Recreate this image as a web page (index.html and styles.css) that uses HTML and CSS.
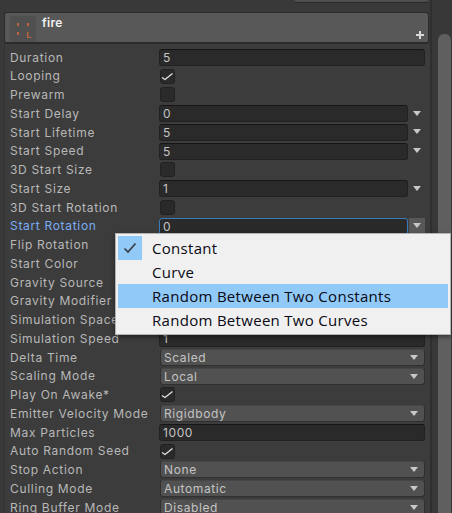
FILE: index.html
```html
<!DOCTYPE html>
<html>
    <head>
        <meta charset="UTF-8">
        <meta name="viewport" content="width=device-width, initial-scale=1.0">
        <title>Particle System</title>
        <link rel="stylesheet" href="styles.css">
    </head>
    <body>
        <div class="page">
            <div class="inspector">
                <div class="top-strip"></div>

                <div class="module-head">
                    <div class="module-icon">
                        <svg width="26" height="26" viewBox="0 0 26 26">
                            <rect x="7" y="7" width="2" height="3" fill="#b8603f"/>
                            <rect x="17" y="7" width="2" height="3" fill="#c0623e"/>
                            <rect x="7" y="16" width="2" height="3" fill="#b8603f"/>
                            <path d="M17 16h1.500v5h3v1h-4.500z" fill="#b8603f"/>
                        </svg>
                    </div>
                    <span class="module-name">fire</span>
                    <svg class="module-plus" width="8" height="8" viewBox="0 0 8 8">
                        <path d="M3 0h2v3h3v2h-3v3h-2v-3h-3v-2h3z" fill="#d8d8d8"/>
                    </svg>
                </div>

                <div class="rows">
                    <div class="row"><label>Duration</label><div class="field">5</div></div>
                    <div class="row"><label>Looping</label><div class="check"><svg width="13" height="13" viewBox="0 0 13 13"><path d="M1 7.500l3 2 7.500-6" fill="none" stroke="#e4e4e4" stroke-width="1.300"/></svg></div></div>
                    <div class="row"><label>Prewarm</label><div class="check"></div></div>
                    <div class="row"><label>Start Delay</label><div class="field short">0</div><div class="curve-btn"></div></div>
                    <div class="row"><label>Start Lifetime</label><div class="field short">5</div><div class="curve-btn"></div></div>
                    <div class="row"><label>Start Speed</label><div class="field short">5</div><div class="curve-btn"></div></div>
                    <div class="row"><label>3D Start Size</label><div class="check"></div></div>
                    <div class="row"><label>Start Size</label><div class="field short">1</div><div class="curve-btn"></div></div>
                    <div class="row"><label>3D Start Rotation</label><div class="check"></div></div>
                    <div class="row"><label class="active">Start Rotation</label><div class="field short focus">0</div><div class="curve-btn open"></div></div>
                    <div class="row"><label>Flip Rotation</label><div class="field"></div></div>
                    <div class="row"><label>Start Color</label><div class="field"></div></div>
                    <div class="row"><label>Gravity Source</label><div class="popup"></div></div>
                    <div class="row"><label>Gravity Modifier</label><div class="field short"></div><div class="curve-btn"></div></div>
                    <div class="row"><label>Simulation Space</label><div class="popup"></div></div>
                    <div class="row"><label>Simulation Speed</label><div class="field">1</div></div>
                    <div class="row"><label>Delta Time</label><div class="popup">Scaled</div></div>
                    <div class="row"><label>Scaling Mode</label><div class="popup">Local</div></div>
                    <div class="row"><label>Play On Awake*</label><div class="check"><svg width="13" height="13" viewBox="0 0 13 13"><path d="M1 7.500l3 2 7.500-6" fill="none" stroke="#e4e4e4" stroke-width="1.300"/></svg></div></div>
                    <div class="row"><label>Emitter Velocity Mode</label><div class="popup">Rigidbody</div></div>
                    <div class="row"><label>Max Particles</label><div class="field">1000</div></div>
                    <div class="row"><label>Auto Random Seed</label><div class="check"><svg width="13" height="13" viewBox="0 0 13 13"><path d="M1 7.500l3 2 7.500-6" fill="none" stroke="#e4e4e4" stroke-width="1.300"/></svg></div></div>
                    <div class="row"><label>Stop Action</label><div class="popup">None</div></div>
                    <div class="row"><label>Culling Mode</label><div class="popup">Automatic</div></div>
                    <div class="row"><label>Ring Buffer Mode</label><div class="popup">Disabled</div></div>
                </div>
            </div>

            <div class="scrollbar"><div class="thumb"></div></div>

            <div class="menu">
                <div class="menu-item">
                    <span class="tick">
                        <svg width="14" height="12" viewBox="0 0 14 12">
                            <path d="M1.500 6.500l3.500 3.500 7.500-8.500" fill="none" stroke="#3a3f46" stroke-width="1.700"/>
                        </svg>
                    </span>
                    <span>Constant</span>
                </div>
                <div class="menu-item"><span class="tick off"></span><span>Curve</span></div>
                <div class="menu-item hover"><span class="tick off"></span><span>Random Between Two Constants</span></div>
                <div class="menu-item"><span class="tick off"></span><span>Random Between Two Curves</span></div>
            </div>
        </div>
    </body>
</html>
```

FILE: styles.css
```css
html, body{
    margin: 0;
    height: 100%;
    overflow: hidden;
    background-color: #393939;
}
.page{
    position: relative;
    display: flex;
    width: 452px;
    height: 513px;
    overflow: hidden;
    font-family: "Inter", "Liberation Sans", sans-serif;
}
.inspector{
    width: 430px;
    flex: none;
    background-color: #393939;
}
.top-strip{
    height: 3px;
    margin: 0 1px 9px 294px;
    background-color: #4d4d4d;
    border-bottom: 1px solid #292929;
    border-radius: 0 0 3px 3px;
    box-sizing: border-box;
}
.module-head{
    position: relative;
    display: flex;
    gap: 6px;
    height: 32px;
    margin: 0 1px 0 4px;
    padding: 3px 0 0 5px;
    box-sizing: border-box;
    background-color: #585858;
    border: 1px solid #2b2b2b;
    border-bottom-width: 2px;
    border-radius: 3px;
}
.module-icon{
    width: 26px;
    height: 26px;
    border-radius: 3px;
    background-color: #505050;
}
.module-name{
    color: #f0f0f0;
    font-size: 12px;
    font-weight: 600;
    letter-spacing: 0.3px;
    line-height: 14px;
}
.module-plus{
    position: absolute;
    right: 4px;
    bottom: 3px;
}
.rows{
    display: grid;
    grid-auto-rows: 18.75px;
    padding: 4px 0 0 5px;
    margin-left: 4px;
    background-color: #3c3c3c;
    border-left: 1px solid #333;
}
.row{
    display: flex;
    align-items: center;
}
label{
    width: 149px;
    flex: none;
    padding-bottom: 0.5px;
    color: #b8b8b8;
    font-size: 12px;
    letter-spacing: 0.68px;
    white-space: nowrap;
}
label.active{
    color: #7babf5;
}
.field, .popup{
    width: 266px;
    height: 17px;
    box-sizing: border-box;
    padding-left: 3px;
    color: #c4c4c4;
    font-size: 12px;
    letter-spacing: 0.6px;
    line-height: 15px;
    border-radius: 3px;
}
.field{
    background-color: #2a2a2a;
    border: 1px solid #212121;
    border-top-color: #161616;
}
.field.short{
    width: 249px;
}
.field.focus{
    border-color: #3a79bb;
}
.popup{
    position: relative;
    background-color: #515151;
    border: 1px solid #303030;
    border-top-color: #464646;
    margin-left: 1px;
    width: 265px;
}
.popup::after{
    content: "";
    position: absolute;
    right: 6px;
    top: 5px;
    border-style: solid;
    border-width: 5px 4.500px 0;
    border-color: #c8c8c8 transparent transparent;
}
.curve-btn{
    position: relative;
    width: 16px;
    height: 16px;
    margin-left: 1px;
}
.curve-btn.open{
    background-color: #585858;
}
.curve-btn::after{
    content: "";
    position: absolute;
    left: 4px;
    top: 5px;
    border-style: solid;
    border-width: 5px 4.500px 0;
    border-color: #c8c8c8 transparent transparent;
}
.check{
    width: 15px;
    height: 15px;
    margin-left: 1px;
    box-sizing: border-box;
    background-color: #2a2a2a;
    border: 1px solid #212121;
    border-radius: 3px;
}
.check svg{
    display: block;
}
.scrollbar{
    flex: 1;
    display: flex;
    justify-content: flex-end;
    padding: 34px 1px 0 0;
    background-color: #383838;
    border-left: 2px solid #2f2f2f;
}
.thumb{
    width: 13px;
    height: 100%;
    background-color: #5f5f5f;
    border-radius: 6px 6px 0 0;
}
.menu{
    position: absolute;
    left: 115px;
    top: 233px;
    width: 336px;
    box-sizing: border-box;
    padding: 2px;
    background-color: #f0f0f0;
    border: 1px solid #b4b4b4;
    box-shadow: 0 2px 4px rgba(0, 0, 0, 0.45);
    font-family: "Open Sans", "Noto Sans", sans-serif;
    color: #0a0a14;
    font-size: 15px;
    letter-spacing: 0.3px;
}
.menu-item{
    display: flex;
    align-items: center;
    gap: 10px;
    height: 24px;
}
.menu-item.hover{
    background-color: #91c9f7;
}
.tick{
    display: flex;
    align-items: center;
    justify-content: center;
    width: 24px;
    height: 24px;
    background-color: #91c9f7;
}
.tick.off{
    background-color: transparent;
}
```
